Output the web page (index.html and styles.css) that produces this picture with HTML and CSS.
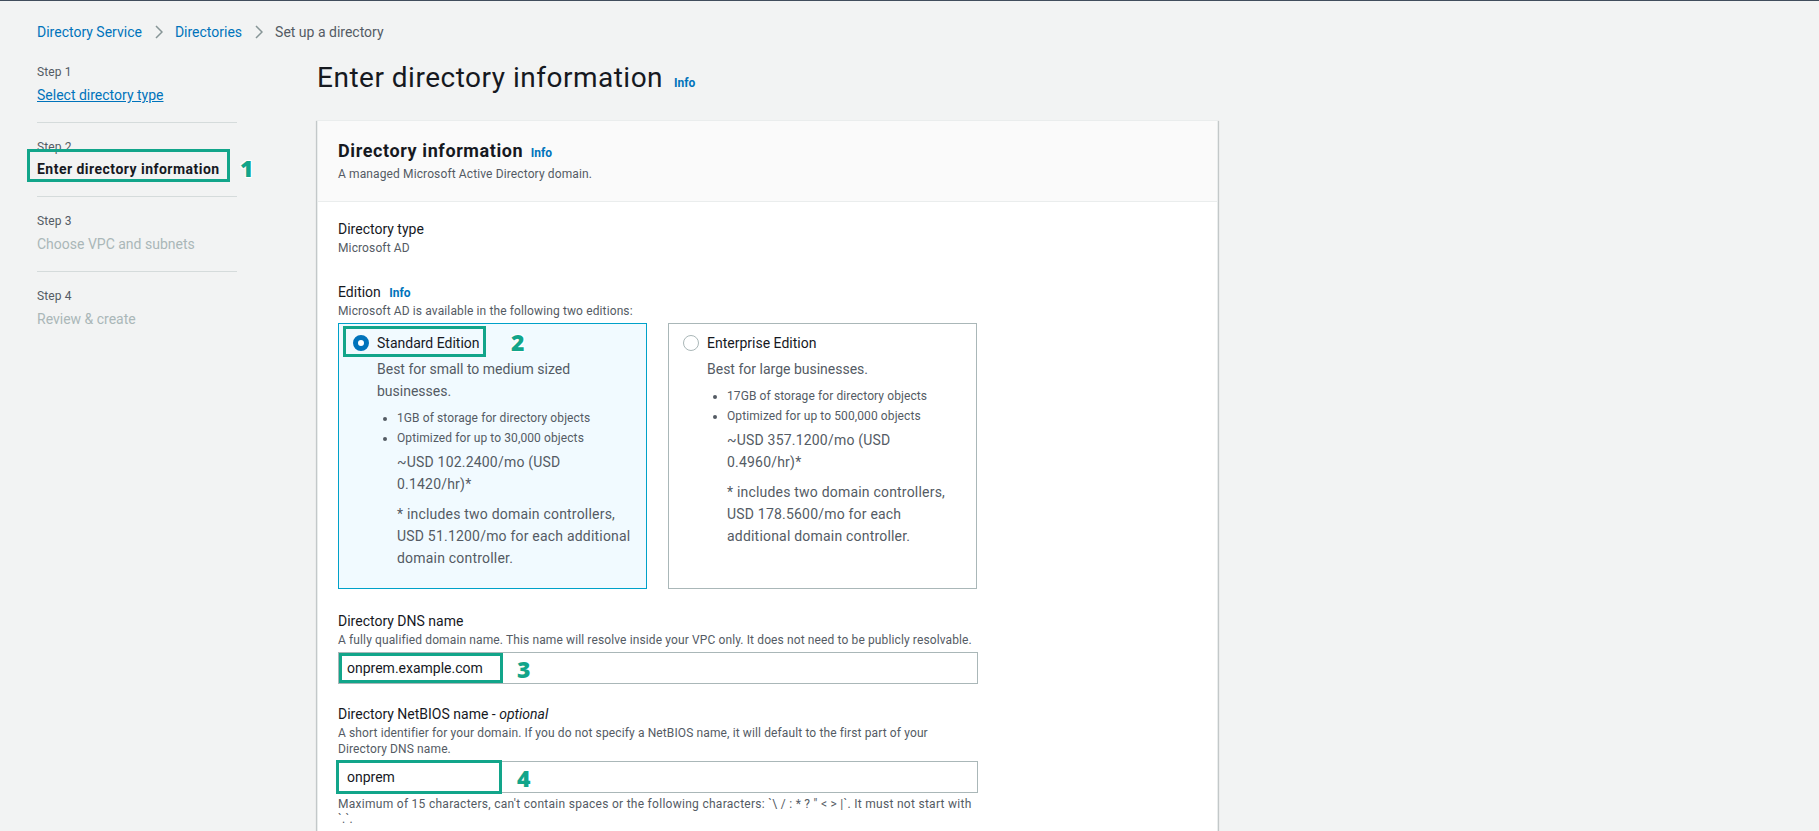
FILE: index.html
```html
<!DOCTYPE html>
<html lang="en">
<head>
<meta charset="utf-8">
<title>Set up a directory</title>
<link rel="stylesheet" href="styles.css">
</head>
<body>
<div class="top-line"></div>
<nav class="breadcrumbs">
  <a class="crumb" href="#">Directory Service</a>
  <svg class="chev" width="8" height="14" viewBox="0 0 8 14"><path d="M1 1l6 6-6 6" fill="none" stroke="#879596" stroke-width="1.5"/></svg>
  <a class="crumb" href="#">Directories</a>
  <svg class="chev" width="8" height="14" viewBox="0 0 8 14"><path d="M1 1l6 6-6 6" fill="none" stroke="#879596" stroke-width="1.5"/></svg>
  <span class="crumb-current">Set up a directory</span>
</nav>
<div class="layout">
  <aside class="steps">
    <div class="step first">
      <div class="step-label">Step 1</div>
      <a class="step-title link" href="#">Select directory type</a>
    </div>
    <div class="step">
      <div class="step-label">Step 2</div>
      <div class="step-title current"><span class="anno-wrap">Enter directory information<span class="anno-box box1"></span><span class="anno-num num1">1</span></span></div>
    </div>
    <div class="step">
      <div class="step-label">Step 3</div>
      <div class="step-title disabled">Choose VPC and subnets</div>
    </div>
    <div class="step">
      <div class="step-label">Step 4</div>
      <div class="step-title disabled">Review &amp; create</div>
    </div>
  </aside>
  <main class="content">
    <h1 class="page-title"><span class="title-text">Enter directory information</span> <a class="info" href="#">Info</a></h1>
    <section class="card">
      <header class="card-header">
        <h2 class="card-title"><span class="title-text">Directory information</span> <a class="info" href="#">Info</a></h2>
        <p class="card-sub">A managed Microsoft Active Directory domain.</p>
      </header>
      <div class="card-body">
        <div class="field">
          <div class="label">Directory type</div>
          <div class="value">Microsoft AD</div>
        </div>
        <div class="field edition">
          <div class="label">Edition <a class="info" href="#">Info</a></div>
          <div class="desc">Microsoft AD is available in the following two editions:</div>
          <div class="tiles">
            <div class="tile selected">
              <div class="tile-head">
                <span class="anno-wrap head-wrap"><span class="radio checked"></span><span class="tile-name">Standard Edition</span><span class="anno-box box2"></span><span class="anno-num num2">2</span></span>
              </div>
              <div class="tile-body">
                <p class="tile-desc">Best for small to medium sized businesses.</p>
                <ul class="tile-list">
                  <li>1GB of storage for directory objects</li>
                  <li>Optimized for up to 30,000 objects</li>
                </ul>
                <p class="price">~USD 102.2400/mo (USD 0.1420/hr)*</p>
                <p class="foot">* includes two domain controllers, USD 51.1200/mo for each additional domain controller.</p>
              </div>
            </div>
            <div class="tile">
              <div class="tile-head">
                <span class="head-wrap"><span class="radio"></span><span class="tile-name">Enterprise Edition</span></span>
              </div>
              <div class="tile-body">
                <p class="tile-desc">Best for large businesses.</p>
                <ul class="tile-list">
                  <li>17GB of storage for directory objects</li>
                  <li>Optimized for up to 500,000 objects</li>
                </ul>
                <p class="price">~USD 357.1200/mo (USD 0.4960/hr)*</p>
                <p class="foot">* includes two domain controllers, USD 178.5600/mo for each additional domain controller.</p>
              </div>
            </div>
          </div>
        </div>
        <div class="field dns">
          <div class="label">Directory DNS name</div>
          <div class="desc">A fully qualified domain name. This name will resolve inside your VPC only. It does not need to be publicly resolvable.</div>
          <div class="input-wrap">
            <div class="input">onprem.example.com</div>
            <span class="anno-box box3"></span><span class="anno-num num3">3</span>
          </div>
        </div>
        <div class="field netbios">
          <div class="label">Directory NetBIOS name - <i>optional</i></div>
          <div class="desc">A short identifier for your domain. If you do not specify a NetBIOS name, it will default to the first part of your Directory DNS name.</div>
          <div class="input-wrap">
            <div class="input">onprem</div>
            <span class="anno-box box4"></span><span class="anno-num num4">4</span>
          </div>
          <div class="hint">Maximum of 15 characters, can't contain spaces or the following characters: `\ / : * ? " &lt; &gt; |`. It must not start with `.`.</div>
        </div>
      </div>
    </section>
  </main>
</div>
</body>
</html>
```

FILE: styles.css
```css
* { box-sizing: border-box; }
html, body { margin: 0; padding: 0; }
body {
  background: #f2f3f3;
  font-family: Roboto, "Liberation Sans", sans-serif;
  color: #16191f;
  font-size: 14px;
  line-height: 22px;
  overflow: hidden;
}
a { text-decoration: none; color: #0073bb; }
p { margin: 0; }

.top-line { height: 1px; background: #414d5c; }

.breadcrumbs {
  display: flex;
  align-items: center;
  padding: 20px 0 0 37px;
  height: 42px;
  font-size: 14px;
  line-height: 22px;
}
.crumb { color: #0073bb; }
.chev { margin: 0 12px 0 13px; }
.crumb-current { color: #545b64; }

.layout {
  display: flex;
  align-items: flex-start;
  padding-left: 37px;
}

.steps { width: 200px; margin-top: 21px; flex: none; }
.step { padding: 16px 0 16px; border-top: 1px solid #d5dbdb; }
.step.first { border-top: none; padding-top: 0; padding-bottom: 16px; }
.step-label { font-size: 12px; line-height: 16px; color: #545b64; letter-spacing: 0.1px; }
.step-title { margin-top: 4px; font-size: 14px; line-height: 22px; }
.step-title.link { display: inline-block; color: #0073bb; text-decoration: underline; }
.step-title.current { font-weight: 700; color: #16191f; letter-spacing: 0.48px; margin-top: 3px; }
.step-title.disabled { color: #aab7b8; }

.anno-wrap { position: relative; display: inline-block; }
.anno-box {
  position: absolute;
  border: 3px solid #12a58a;
  pointer-events: none;
}
.anno-num {
  position: absolute;
  font-family: "Open Sans", "DejaVu Sans", sans-serif;
  font-weight: 800;
  font-size: 23px;
  line-height: 24px;
  letter-spacing: 0;
  color: #12a58a;
  text-shadow: 0 0 2px #fff, 0 0 2px #fff, 1px 1px 0 #fff, -1px -1px 0 #fff, 1px -1px 0 #fff, -1px 1px 0 #fff;
}
.box1 { left: -10px; top: -9px; width: 203px; height: 33px; }
.num1 { left: 203px; top: -2px; }

.content { margin-left: 80px; width: 901px; flex: none; }
.page-title {
  margin: 17px 0 24px;
  font-size: 28px;
  line-height: 36px;
  font-weight: 400;
  color: #16191f;
}
.page-title .title-text { letter-spacing: 0.5px; }
.info { font-size: 12px; font-weight: 700; color: #0073bb; line-height: 16px; letter-spacing: 0; }
.page-title .info { margin-left: 4px; vertical-align: baseline; }

.card {
  background: #fff;
  border: 1px solid #eaeded;
  box-shadow: 0 1px 1px 0 rgba(0, 28, 36, 0.3), 1px 1px 1px 0 rgba(0, 28, 36, 0.15), -1px 1px 1px 0 rgba(0, 28, 36, 0.15);
  height: 760px;
}
.card-header {
  background: #fafafa;
  border-bottom: 1px solid #eaeded;
  padding: 19px 20px 19px;
}
.card-title { margin: 0; font-size: 18px; line-height: 22px; font-weight: 700; }
.card-title .title-text { letter-spacing: 0.6px; }
.card-title .info { margin-left: 3px; }
.card-sub { margin-top: 4px; font-size: 12px; line-height: 16px; color: #545b64; letter-spacing: 0.12px; }

.card-body { padding: 16px 20px; }
.field { max-width: 640px; }
.label { font-size: 14px; line-height: 22px; color: #16191f; }
.label .info { margin-left: 5px; }
.value, .desc { font-size: 12px; line-height: 16px; color: #545b64; letter-spacing: 0.12px; }
.edition { margin-top: 25px; }

.tiles {
  display: grid;
  grid-template-columns: 309px 309px;
  column-gap: 21px;
  margin-top: 4px;
}
.tile {
  border: 1px solid #aab7b8;
  background: #fff;
  padding: 8px 14px 19px;
}
.tile.selected { background: #f1faff; border-color: #00a1c9; }
.tile-head { height: 22px; }
.head-wrap { display: inline-flex; align-items: center; height: 22px; }
.radio {
  width: 16px; height: 16px;
  border-radius: 50%;
  border: 1px solid #aab7b8;
  background: #fff;
  margin-right: 8px;
  flex: none;
}
.radio.checked { border: 5px solid #0073bb; }
.tile-name { font-size: 14px; color: #16191f; }
.box2 { left: -10px; top: -6px; width: 143px; height: 31px; }
.num2 { left: 158px; top: -2px; }

.tile-body { padding-left: 24px; }
.tile-desc { margin-top: 4px; font-size: 14px; line-height: 22px; color: #545b64; }
.tile-list { margin: 6px 0 0; padding-left: 20px; font-size: 12px; line-height: 20px; color: #545b64; letter-spacing: 0.1px; }
.price { margin-top: 3px; padding-left: 20px; font-size: 14px; line-height: 22px; color: #545b64; letter-spacing: 0.2px; }
.foot { margin-top: 8px; padding-left: 20px; font-size: 14px; line-height: 22px; color: #545b64; letter-spacing: 0.2px; }

.dns { margin-top: 21px; }
.input-wrap { position: relative; margin-top: 4px; }
.input {
  height: 32px;
  border: 1px solid #aab7b8;
  background: #fff;
  padding: 0 8px;
  font-size: 14px;
  line-height: 30px;
  color: #16191f;
}
.box3 { left: 1px; top: 1px; width: 164px; height: 30px; }
.num3 { left: 179px; top: 5px; }
.box4 { left: -2px; top: -1px; width: 166px; height: 34px; }
.num4 { left: 179px; top: 5px; }

.netbios { margin-top: 19px; }
.hint { margin-top: 4px; font-size: 12px; line-height: 15px; color: #545b64; letter-spacing: 0.28px; }
```
